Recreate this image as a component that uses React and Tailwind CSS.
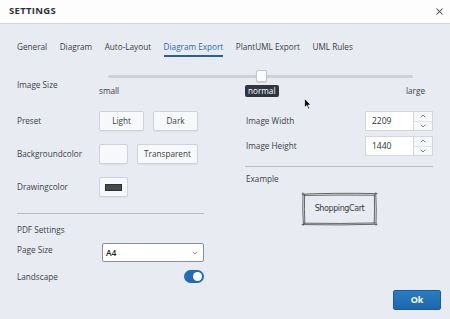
import React from 'react';
import { X, ChevronDown, ChevronUp } from 'lucide-react';

const tabs = ['General', 'Diagram', 'Auto-Layout', 'Diagram Export', 'PlantUML Export', 'UML Rules'];

const Btn = ({ children, className = '' }) => (
  <div
    className={`h-[20px] flex items-center justify-center bg-[#f7f8fa] border border-[#cfd3d9] rounded-[2px] shadow-[0_1px_1px_rgba(0,0,0,0.06)] text-[8.2px] text-[#3a3e45] ${className}`}
  >
    {children}
  </div>
);

const NumberField = ({ value }) => (
  <div className="flex">
    <div className="w-[49px] h-[20px] bg-white border border-[#d3d7dc] flex items-center pl-[6px] text-[8.5px] text-[#2c2f34]">
      {value}
    </div>
    <div className="w-[19px] h-[20px] bg-[#f7f8fa] border border-l-0 border-[#d3d7dc] flex flex-col">
      <div className="flex-1 flex items-center justify-center border-b border-[#e1e4e8]">
        <ChevronUp size={8} strokeWidth={2} className="text-[#444]" />
      </div>
      <div className="flex-1 flex items-center justify-center">
        <ChevronDown size={8} strokeWidth={2} className="text-[#444]" />
      </div>
    </div>
  </div>
);

const App = () => {
  return (
    <div className="relative w-[450px] h-[319px] overflow-hidden bg-[#e8ecf2] font-['Open_Sans',sans-serif] text-[#3c4048]">
      {/* header */}
      <div className="h-[24px] bg-[#fdfdfd] border-b border-[#d3d7dc] flex items-center justify-between pl-[9px] pr-[5px]">
        <span className="text-[9.5px] font-bold tracking-[0.3px] text-[#2e3238]">SETTINGS</span>
        <X size={11} strokeWidth={2.2} className="text-[#444]" />
      </div>

      {/* tabs */}
      <div className="flex gap-[12.5px] pl-[17px] mt-[17px] text-[8.2px] leading-[12px]">
        {tabs.map((t) => (
          <div key={t} className="flex flex-col">
            <span className={t === 'Diagram Export' ? 'text-[#2b6aa9]' : 'text-[#3a3e45]'}>{t}</span>
            <div className={`h-[2px] mt-[2px] ${t === 'Diagram Export' ? 'bg-[#2461a0]' : 'bg-transparent'}`} />
          </div>
        ))}
      </div>

      {/* image size */}
      <div className="flex pl-[17px] mt-[11px] text-[8.2px]">
        <div className="w-[82px] pt-[11px] leading-[12px]">Image Size</div>
        <div className="relative w-[326px]">
          <div className="h-[16px] flex items-center pl-[9px] pr-[12px]">
            <div className="flex-1 h-[3px] rounded-full bg-[#cdd1d7]" />
          </div>
          <div className="absolute left-[157px] top-[2px] w-[11px] h-[12px] rounded-[2px] bg-[#fafbfc] border border-[#c3c8ce] shadow-[0_1px_1px_rgba(0,0,0,0.1)]" />
          <div className="flex justify-between mt-[2px] leading-[10px]">
            <span>small</span>
            <span>large</span>
          </div>
          <div className="absolute left-[146px] top-[17px] h-[12px] px-[3px] rounded-[2px] bg-[#2f3641] text-white leading-[12px]">
            normal
          </div>
        </div>
      </div>

      {/* columns */}
      <div className="flex pl-[17px] mt-[15px] text-[8.2px] leading-[12px]">
        <div className="w-[187px] flex flex-col">
          <div className="flex items-center h-[20px]">
            <span className="w-[82px]">Preset</span>
            <Btn className="w-[45px]">Light</Btn>
            <Btn className="w-[45px] ml-[9px]">Dark</Btn>
          </div>
          <div className="flex items-center h-[20px] mt-[13px]">
            <span className="w-[82px]">Backgroundcolor</span>
            <Btn className="w-[29px]" />
            <Btn className="w-[61px] ml-[9px]">Transparent</Btn>
          </div>
          <div className="flex items-center h-[20px] mt-[13px]">
            <span className="w-[82px]">Drawingcolor</span>
            <Btn className="w-[29px]">
              <div className="w-[17px] h-[7px] bg-[#46494e] border border-[#2e3034]" />
            </Btn>
          </div>
          <div className="h-px bg-[#b8bdc5] mt-[16px]" />
          <div className="mt-[10px]">PDF Settings</div>
          <div className="flex items-start mt-[7px]">
            <span className="w-[85px] pt-[1px]">Page Size</span>
            <div className="w-[102px] h-[19px] bg-white border border-[#8b9097] rounded-[2px] flex items-center justify-between pl-[3px] pr-[4px]">
              <span className="font-semibold text-[#222] text-[8.5px]">A4</span>
              <ChevronDown size={8} strokeWidth={1.8} className="text-[#555]" />
            </div>
          </div>
          <div className="flex items-center justify-between h-[13px] mt-[8px]">
            <span>Landscape</span>
            <div className="w-[20px] h-[13px] rounded-full bg-[#1f6cb6] flex items-center justify-end pr-[2px]">
              <div className="w-[9px] h-[9px] rounded-full bg-white" />
            </div>
          </div>
        </div>

        <div className="w-[188px] ml-[41px] flex flex-col">
          <div className="flex items-center justify-between h-[20px]">
            <span className="pl-[1px]">Image Width</span>
            <NumberField value="2209" />
          </div>
          <div className="flex items-center justify-between h-[20px] mt-[5px]">
            <span className="pl-[1px]">Image Height</span>
            <NumberField value="1440" />
          </div>
          <div className="h-px bg-[#b8bdc5] mt-[10px]" />
          <div className="mt-[6px] pl-[1px]">Example</div>
          <div className="relative w-[77px] h-[34px] ml-[56px] mt-[7px] flex items-center justify-center">
            <svg className="absolute inset-0" width="77" height="34" viewBox="0 0 77 34" fill="none" stroke="#444" strokeWidth="0.8" strokeLinecap="round">
              <path d="M1 2.2 Q30 0.8 76 1.6" />
              <path d="M3 3.4 Q40 2.8 74 3.2" />
              <path d="M2 0.8 Q1.4 17 2.4 33.2" />
              <path d="M3.6 2.6 Q3.2 18 3.8 31.6" />
              <path d="M74.8 0.8 Q75.6 17 75 33.2" />
              <path d="M73.4 3 Q73.8 17 73.2 31" />
              <path d="M1 32.6 Q38 33.4 76 32.3" />
              <path d="M3 31.2 Q40 31.8 74 31" />
            </svg>
            <span className="relative text-[8px] text-[#3a3a3a] font-['DejaVu_Sans',sans-serif] tracking-[-0.4px]">ShoppingCart</span>
          </div>
        </div>
      </div>

      {/* footer */}
      <div className="flex justify-end pr-[9px] mt-[7px]">
        <div className="w-[48px] h-[20px] rounded-[2px] bg-gradient-to-b from-[#2b7cc4] to-[#1b67ad] border border-[#1a5c9a] flex items-center justify-center text-white font-bold text-[9px]">
          Ok
        </div>
      </div>

      {/* mouse cursor */}
      <svg className="absolute left-[304px] top-[98px]" width="8" height="12" viewBox="0 0 8 12">
        <path d="M0.5 0.5 L0.5 9.5 L2.7 7.6 L4.3 11 L5.6 10.4 L4.1 7.1 L7 7 Z" fill="#111" stroke="#fff" strokeWidth="0.7" />
      </svg>
    </div>
  );
};

export default App;
